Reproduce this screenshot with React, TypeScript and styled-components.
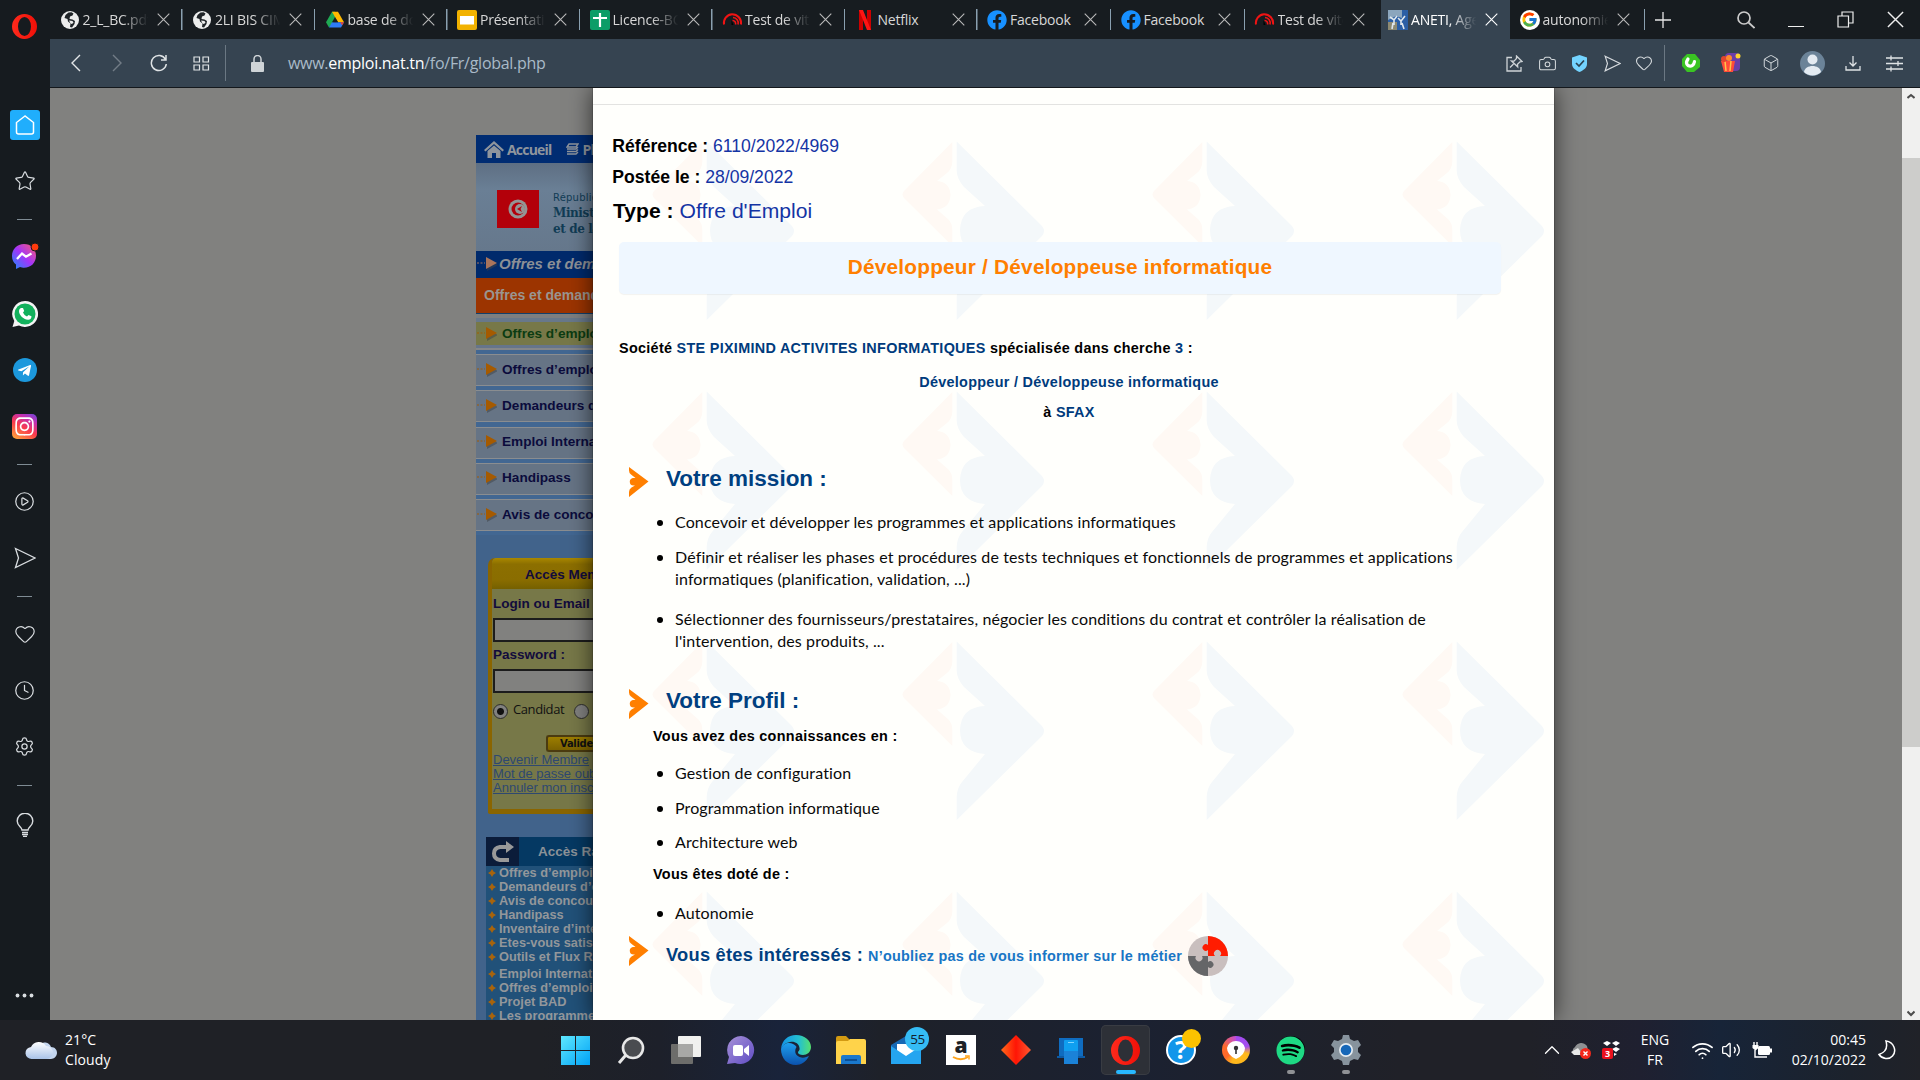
import React from "react";
import styled, { createGlobalStyle, css } from "styled-components";
import { FaFacebook, FaTelegramPlane, FaSpotify, FaInstagram } from "react-icons/fa";
import { FcGoogle } from "react-icons/fc";
import { Star, Heart, Clock, Settings, CirclePlay, Camera, Box, Wifi, Volume2, ChevronUp } from "lucide-react";

const ARIAL = '"Liberation Sans", Arial, sans-serif';
const UI = '"Open Sans", "Noto Sans", sans-serif';
const BODY = "Lato, sans-serif";

const Global = createGlobalStyle`
  * { box-sizing: border-box; }
  html, body { margin: 0; padding: 0; background: #161b1f; }
  svg { display: block; flex: none; }
`;

const Screen = styled.div`
  width: 1920px;
  height: 1080px;
  display: flex;
  flex-direction: column;
  overflow: hidden;
  background: #161b1f;
  font-family: ${UI};
`;
const Browser = styled.div`
  display: flex;
  height: 1020px;
`;
const Main = styled.div`
  width: 1870px;
  display: flex;
  flex-direction: column;
`;

/* ---------- sidebar ---------- */
const Rail = styled.div`
  width: 50px;
  flex: none;
  display: flex;
  flex-direction: column;
  align-items: center;
  padding: 12px 1px 0 0;
  color: #d9dde0;
  background: #161b1f;
`;
const RailItem = styled.div<{ $h: number; $mt?: number }>`
  height: ${(p) => p.$h}px;
  margin-top: ${(p) => p.$mt ?? 0}px;
  display: flex;
  align-items: center;
  justify-content: center;
  flex: none;
`;
const HomeTile = styled.div`
  width: 30px;
  height: 30px;
  border-radius: 3px;
  background: #20aefc;
  display: flex;
  align-items: center;
  justify-content: center;
`;
const RailRule = styled.div`
  width: 15px;
  height: 1px;
  background: #7f8c94;
`;
const Disc = styled.div<{ $bg: string; $size: number; $square?: boolean }>`
  width: ${(p) => p.$size}px;
  height: ${(p) => p.$size}px;
  border-radius: ${(p) => (p.$square ? "5px" : "50%")};
  background: ${(p) => p.$bg};
  color: #fff;
  display: flex;
  align-items: center;
  justify-content: center;
`;

/* ---------- tabs ---------- */
const TabBar = styled.div`
  height: 39px;
  display: flex;
  background: #171c20;
  color: #d8d8d8;
`;
const TabBox = styled.div<{ $w: number; $active?: boolean; $line?: boolean }>`
  width: ${(p) => p.$w}px;
  flex: none;
  display: flex;
  align-items: center;
  padding-left: ${(p) => (p.$active ? 7 : 9.5)}px;
  background: ${(p) => (p.$active ? "#364451" : "transparent")};
  color: ${(p) => (p.$active ? "#fff" : "inherit")};
  ${(p) => p.$line && css`
    background: linear-gradient(#8aa0b0, #8aa0b0) right 0 top 9px / 1.5px 21px no-repeat;
  `}
`;
const Fav = styled.div`
  width: 20px;
  height: 20px;
  display: flex;
  align-items: center;
  justify-content: center;
  margin-right: 3px;
`;
const TabText = styled.div<{ $fade?: boolean }>`
  width: 66px;
  overflow: hidden;
  white-space: nowrap;
  font-size: 14px;
  line-height: 22px;
  letter-spacing: -0.22px;
  ${(p) => p.$fade && css`mask-image: linear-gradient(90deg, #000 58%, transparent 99%);`}
`;
const CloseSlot = styled.div`
  margin-left: 8px;
`;
const WindowButtons = styled.div`
  display: flex;
  align-items: center;
  margin-left: auto;
  gap: 33px;
  padding-right: 16px;
`;
const PlusSlot = styled.div`
  display: flex;
  align-items: center;
  padding-left: 10px;
`;

/* ---------- address bar ---------- */
const AddressBar = styled.div`
  height: 49px;
  display: flex;
  align-items: center;
  background: #364451;
  border-bottom: 1px solid #14181c;
  color: #d5dadd;
  padding-left: 16px;
`;
const ToolSlot = styled.div<{ $w: number; $pl?: number; $dim?: boolean }>`
  width: ${(p) => p.$w}px;
  padding-left: ${(p) => p.$pl ?? 0}px;
  flex: none;
  display: flex;
  justify-content: center;
  opacity: ${(p) => (p.$dim ? 0.35 : 1)};
`;
const BarRule = styled.div`
  width: 1px;
  height: 36px;
  flex: none;
  background: #6b7883;
`;
const Url = styled.div`
  font-size: 16px;
  line-height: 24px;
  color: #a9bac8;
  letter-spacing: -0.28px;
  width: 1200px;
  flex: none;
  b { font-weight: 400; color: #fff; }
`;

/* ---------- page ---------- */
const Viewport = styled.div`
  height: 932px;
  display: flex;
  background: #81817f;
  position: relative;
  overflow: hidden;
`;
const SitePane = styled.div`
  width: 117px;
  margin-left: 426px;
  height: 932px;
  flex: none;
  overflow: hidden;
  white-space: nowrap;
  font-family: ${ARIAL};
  font-weight: 700;
  padding-top: 47px;
`;
const TopNav = styled.div`
  height: 28px;
  background: #002c72;
  display: flex;
  align-items: center;
  color: #8f959d;
  font: 700 14px "Open Sans", sans-serif;
  letter-spacing: -0.8px;
  padding-left: 8px;
  gap: 3px;
`;
const NavGap = styled.div`
  width: 9px;
  flex: none;
`;
const Ministry = styled.div`
  height: 88px;
  background: linear-gradient(#5e6f83, #6a7f95 30%, #66788c);
  display: flex;
  padding: 27px 0 0 21px;
  gap: 14px;
`;
const Flag = styled.div`
  width: 42px;
  height: 38px;
  flex: none;
  background: #b3000a;
  display: flex;
  align-items: center;
  justify-content: center;
`;
const MinistryText = styled.div`
  font: 700 12px/16px "DejaVu Serif", serif;
  color: #113c55;
  letter-spacing: -0.4px;
  span { font: 400 10px/15px "DejaVu Sans", sans-serif; display: block; letter-spacing: 0.2px; }
`;
const BlueBanner = styled.div`
  height: 27px;
  background: #002a6c;
  color: #8c9096;
  font-style: italic;
  font-size: 15px;
  display: flex;
  align-items: center;
  gap: 2px;
  padding: 0 0 3px 1px;
`;
const OrangeBanner = styled.div`
  height: 36px;
  background: #9c3400;
  color: #9a9590;
  font-size: 14px;
  line-height: 34px;
  padding-left: 8px;
  border-bottom: 1px solid #12406b;
`;
const Menu = styled.div`
  padding-top: 4px;
  background: #7d7f80;
  display: flex;
  flex-direction: column;
`;
const MenuItem = styled.div<{ $on?: boolean }>`
  height: 36.2px;
  display: flex;
  align-items: center;
  gap: 5px;
  font-size: 13.6px;
  padding: 0 0 6px 1px;
  color: ${(p) => (p.$on ? "#0b3c12" : "#0b0b3c")};
  background: ${(p) =>
    p.$on
      ? "linear-gradient(#68788a 4px,#777848 4px,#777848 27px,#66758a 27px,#66758a 30px,#858789 30px,#858789 32px,#426792 32px)"
      : "linear-gradient(#8a8d90 1px,#667485 1px,#667485 31px,#8a8d90 31px,#8a8d90 32px,#426792 32px)"};
`;
const SiteBody = styled.div`
  background: #41638b;
  height: 500px;
  padding: 23px 0 0 10px;
`;
const LoginBox = styled.div`
  margin-left: 2px;
  height: 256px;
  background: #777848;
  border: solid #8a6500;
  border-width: 0 0 5px 4px;
  border-radius: 7px 0 0 2px;
  color: #120b3c;
  font-size: 13.5px;
`;
const LoginHead = styled.div`
  height: 31px;
  background: linear-gradient(#a98800, #8c6f00 20%, #8a6d00 70%, #756000);
  line-height: 33px;
  padding-left: 33px;
  border-radius: 5px 0 0 0;
`;
const FieldLabel = styled.div<{ $mt: number }>`
  margin-top: ${(p) => p.$mt}px;
  line-height: 18px;
  padding-left: 1px;
`;
const Field = styled.div<{ $mt: number }>`
  margin: ${(p) => p.$mt}px 0 0 1px;
  height: 24px;
  background: #81817f;
  border: 2px solid #1c1c1c;
  border-right: 0;
`;
const Radios = styled.div`
  display: flex;
  align-items: center;
  gap: 5px;
  height: 22px;
  margin-top: 5px;
  padding-left: 1px;
  color: #111;
  font: 400 13px "Open Sans", sans-serif;
  letter-spacing: -0.4px;
`;
const Radio = styled.div<{ $on?: boolean; $ml?: number }>`
  width: 15px;
  height: 15px;
  flex: none;
  margin: 4px 0 0 ${(p) => p.$ml ?? 0}px;
  border-radius: 50%;
  border: 1.5px solid #2d2d2d;
  background: ${(p) => (p.$on ? "radial-gradient(#111 0 3px, #81817f 4px)" : "#81817f")};
`;
const Valider = styled.div`
  height: 17px;
  margin: 15px 0 0 54px;
  border: 2px solid #4b3b10;
  border-right: 0;
  border-radius: 3px 0 0 3px;
  background: linear-gradient(#9c7e00, #7c6200);
  color: #111;
  font: 700 10px/13px "DejaVu Sans", sans-serif;
  letter-spacing: -0.3px;
  padding-left: 12px;
`;
const Links = styled.div`
  font-weight: 400;
  font-size: 13px;
  line-height: 14px;
  color: #2e4870;
  text-decoration: underline;
  padding-top: 1px;
  padding-left: 1px;
`;
const QuickHead = styled.div`
  margin-top: 23px;
  height: 29px;
  display: flex;
  align-items: center;
  background: #053963;
  color: #8b9298;
  font-size: 13.5px;
  gap: 19px;
`;
const QuickIcon = styled.div`
  width: 33px;
  height: 29px;
  flex: none;
  background: #0b1c3a;
  display: flex;
  align-items: center;
  justify-content: center;
`;
const Quick = styled.div`
  background: #215179;
  color: #93979b;
  font-size: 12.8px;
  height: 170px;
`;
const QuickRow = styled.div<{ $gap?: boolean }>`
  display: flex;
  align-items: center;
  height: 14px;
  margin-top: ${(p) => (p.$gap ? 3 : 0)}px;
  gap: 3px;
  padding: 0 0 1px 2px;
`;

const tile = encodeURIComponent(
  `<svg xmlns="http://www.w3.org/2000/svg" width="250" height="250"><path fill="#fff9f4" d="M109.3 54V74Q109 81 104 85L94 93Q107 94 107.500 107Q107 120 94 121.500L105 131Q109.300 135 109.300 142V158L61 110Q58 106.500 61 103Z"/><path fill="#f4f8fa" d="M113.700 53.500L199 138Q203 143 199 148L113.700 232V209Q114 200 119 194L142 166Q117 164 117 142Q118 119 142 118L121 99Q114 91 113.700 83Z"/></svg>`
);
const Modal = styled.div`
  width: 961px;
  height: 932px;
  flex: none;
  background: #fffffc url("data:image/svg+xml,${tile}") 0 0 / 250px 250px;
  box-shadow: 0 0 22px rgba(0, 0, 0, 0.65), 0 0 1px #222;
  font-family: ${ARIAL};
  color: #000;
  white-space: nowrap;
  z-index: 1;
`;
const ModalTop = styled.div`
  height: 17px;
  background: #fffffc;
  border-bottom: 1px solid #e3e3e1;
`;
const Meta = styled.div<{ $size: number; $mt?: number; $pl?: number }>`
  font-size: ${(p) => p.$size}px;
  line-height: 31px;
  height: 31px;
  margin-top: ${(p) => p.$mt ?? 0}px;
  padding-left: ${(p) => p.$pl ?? 19.3}px;
  color: #1434a4;
  b { color: #000; }
`;
const JobTitle = styled.div`
  margin: 16px 0 0 26px;
  width: 882px;
  height: 52px;
  line-height: 50px;
  border-radius: 5px;
  background: #eff7ff;
  box-shadow: 0 1px 1px rgba(0, 0, 0, 0.05);
  text-align: center;
  font-weight: 700;
  font-size: 20.8px;
  letter-spacing: 0.22px;
  color: #ff7f00;
`;
const Line = styled.div<{ $mt: number; $pl?: number; $center?: boolean }>`
  margin-top: ${(p) => p.$mt}px;
  height: 24px;
  line-height: 24px;
  font-size: 14.4px;
  font-weight: 700;
  letter-spacing: 0.3px;
  padding-left: ${(p) => p.$pl ?? 0}px;
  ${(p) => p.$center && css`width: 952px; text-align: center;`}
`;
const Navy = styled.span`
  color: #003b7c;
`;
const Heading = styled.div<{ $mt: number }>`
  margin-top: ${(p) => p.$mt}px;
  height: 34px;
  display: flex;
  padding-left: 36px;
  gap: 17px;
  font-weight: 700;
  font-size: 22.5px;
  line-height: 31px;
  color: #003f80;
  & > svg { margin-top: 4px; }
`;
const Interested = styled.div`
  padding-top: 8px;
  font-size: 18.3px;
  line-height: 30px;
  display: flex;
  letter-spacing: 0.24px;
`;
const Metier = styled.span`
  font-size: 14.4px;
  color: #1976c5;
  letter-spacing: 0.25px;
  padding: 1px 6px 0 5px;
`;
const PuzzleSlot = styled.div`
  margin-top: -4px;
`;
const Item = styled.div<{ $mt: number }>`
  margin-top: ${(p) => p.$mt}px;
  display: flex;
  padding-left: 64px;
  gap: 12px;
  font-family: ${BODY};
  font-size: 16px;
  line-height: 22px;
  letter-spacing: 0.12px;
  color: #0a0a0a;
`;
const Bullet = styled.div`
  width: 6px;
  height: 6px;
  border-radius: 50%;
  background: #000;
  margin-top: 9px;
`;
const Scroll = styled.div`
  width: 18px;
  margin-left: auto;
  background: #f0f0ef;
  display: flex;
  flex-direction: column;
  align-items: center;
  padding-top: 5px;
  z-index: 2;
`;
const Thumb = styled.div`
  width: 18px;
  height: 589px;
  margin: 58px 0 263px;
  background: #cdcdcb;
`;

/* ---------- taskbar ---------- */
const Taskbar = styled.div`
  height: 60px;
  flex: none;
  display: flex;
  color: #fff;
  background: linear-gradient(90deg, #1f2126 0, #1f2126 540px, #1d202a 660px, #19233a 780px, #1e2129 880px, #1b2131 1130px, #202128 1400px, #202128 1530px, #1f2030 1640px, #172438 1720px, #1c222c 1850px, #202228 1920px);
`;
const Weather = styled.div`
  width: 548px;
  display: flex;
  align-items: center;
  padding-left: 25px;
  gap: 8px;
`;
const Stack = styled.div<{ $align?: string; $ls?: number }>`
  font-size: 14px;
  line-height: 20px;
  letter-spacing: ${(p) => p.$ls ?? 0}px;
  text-align: ${(p) => p.$align ?? "left"};
`;
const Apps = styled.div`
  display: flex;
  width: 825px;
`;
const AppButton = styled.div<{ $on?: boolean; $mark?: boolean }>`
  width: 50px;
  height: 50px;
  margin: 5px 2.55px 0;
  border-radius: 5px;
  display: flex;
  align-items: center;
  justify-content: center;
  position: relative;
  ${(p) => p.$on && css`background: #2d3037; box-shadow: inset 0 0 0 1px #393c43;`}
  ${(p) => (p.$on || p.$mark) && css`
    &::after {
      content: "";
      position: absolute;
      bottom: 1px;
      width: ${p.$on ? 20 : 8}px;
      height: 4px;
      border-radius: 2px;
      background: ${p.$on ? "#28b8ff" : "#8f9195"};
    }
  `}
`;
const Badge = styled.div<{ $bg: string; $size: number; $right: number; $top: number }>`
  position: absolute;
  top: ${(p) => p.$top}px;
  right: ${(p) => p.$right}px;
  width: ${(p) => p.$size}px;
  height: ${(p) => p.$size}px;
  border-radius: 50%;
  background: ${(p) => p.$bg};
  color: #10202c;
  font-size: 13.5px;
  letter-spacing: -0.5px;
  display: flex;
  align-items: center;
  justify-content: center;
`;
const AmazonTile = styled.div`
  width: 30px;
  height: 30px;
  background: #fff;
  display: flex;
  align-items: center;
  justify-content: center;
`;
const Tray = styled.div`
  margin-left: auto;
  display: flex;
  align-items: center;
  padding-right: 24px;
`;
const TraySlot = styled.div<{ $w: number; $end?: boolean }>`
  width: ${(p) => p.$w}px;
  flex: none;
  display: flex;
  justify-content: ${(p) => (p.$end ? "flex-end" : "center")};
`;

/* ---------- drawings ---------- */
const Cross = ({ s = 13, c = "#b9b9b9" }: { s?: number; c?: string }) => (
  <svg width={s} height={s} viewBox="0 0 13 13" stroke={c} strokeWidth="1.1"><path d="M.7.7l11.6 11.6M12.3.7L.7 12.3" /></svg>
);
const OperaO = ({ w, h, sw }: { w: number; h: number; sw: number }) => (
  <svg width={w} height={h} viewBox={`0 0 ${w} ${h}`} fill="none">
    <defs><linearGradient id={`op${w}`}><stop stopColor="#ff2a1c" /><stop offset="1" stopColor="#f01008" /></linearGradient></defs>
    <path fill={`url(#op${w})`} fillRule="evenodd" d={`M${w / 2} 0A${w / 2} ${h / 2} 0 1 1 ${w / 2} ${h}A${w / 2} ${h / 2} 0 1 1 ${w / 2} 0ZM${w / 2} ${sw * 0.5}A${w / 2 - sw} ${h / 2 - sw * 0.5} 0 1 0 ${w / 2} ${h - sw * 0.5}A${w / 2 - sw} ${h / 2 - sw * 0.5} 0 1 0 ${w / 2} ${sw * 0.5}Z`} />
  </svg>
);
const Globe = () => (
  <svg width="18" height="18" viewBox="0 0 18 18"><circle cx="9" cy="9" r="9" fill="#eceded" /><path fill="#1f2428" d="M7.500 1.500l3-.3 2 1.300-1 2-2.500 1-.5 2.500 3 .5 2.500 1.500-.5 3-2.500 3.500-2-.5.5-3.500-2.500-2-.5-2.500-3-1 1-3z" /><path fill="#eceded" d="M8 9.500l3.500.5 1 1.500-1.500 1.500-1.500-.5z" /></svg>
);
const Drive = () => (
  <svg width="18" height="17" viewBox="0 0 24 21"><path fill="#1faa53" d="M8 0h4l4 7L4 21 0 14z" /><path fill="#ffba00" d="M8 0h8l8 14h-8z" /><path fill="#2e7bf6" d="M4 21l4-7h16l-4 7z" /><path fill="#ea4335" d="M19 14h5l-2.500 4z" /><path fill="#171c20" d="M12 7l4 7H8z" /></svg>
);
const Slides = () => <svg width="20" height="20"><rect width="20" height="20" rx="2" fill="#f2b200" /><rect x="3" y="6" width="14" height="8.500" fill="#fff" /></svg>;
const Sheets = () => <svg width="20" height="20"><rect width="20" height="20" rx="2" fill="#0c9d67" /><path d="M10 3v14M3 8h14" stroke="#fff" strokeWidth="2.2" /></svg>;
const Speed = () => (
  <svg width="21" height="16" viewBox="0 0 21 16" fill="none" stroke="#f01414"><path strokeWidth="2" d="M2 12.500A8.800 8.800 0 0 1 10 2.200 9 9 0 0 1 19 12.500" /><path strokeWidth="1.6" d="M11 5.500a5.500 5.500 0 0 1 5 7M10.500 8.500a3 3 0 0 1 3 4" /><path fill="#000" stroke="none" d="M9.500 8l2 5h-2z" /></svg>
);
const NetflixN = () => <svg width="12" height="20"><path fill="#c00" d="M0 0h4v20H0zM8 0h4v20H8z" /><path fill="#ff1414" d="M0 0h4l8 20H8z" /></svg>;
const Aneti = () => (
  <svg width="20" height="20"><rect width="20" height="20" fill="#2b5fa5" /><path fill="#8ba6bd" d="M0 0h14v8L8 6 0 10z" /><path fill="#8d8a72" d="M0 12h9v8H0z" /><g stroke="#dfe8ee" strokeWidth="1.6" fill="none"><path d="M2 7l4 3 3-4M6 10v5M5 13l-1 6M10 8l3 3 4-5M13 11v4M14 13l2 6" /></g></svg>
);
const Chevron = ({ d }: { d: string }) => <svg width="12" height="20" viewBox="0 0 12 20" fill="none" stroke="#e3e6e8" strokeWidth="1.4"><path d={d} /></svg>;
const Send = ({ s, sw = 1.3 }: { s: number; sw?: number }) => <svg width={s} height={s} viewBox="0 0 22 22" fill="none" stroke="#d9dde0" strokeWidth={sw}><path d="M1.500 1.500L21 11 1.500 20.500 4.500 11z" /></svg>;
const ArrowMark = () => (
  <svg width="20" height="30" viewBox="0 0 20 30"><path fill="#ff7f00" d="M0 0L19.500 14.500 0 30V25Q0 22 2.500 20.500L6 18.500C2 19 .8 17 .8 14.800S2 10.500 6.500 11L2 7.500Q0 6 0 3.500Z" /></svg>
);
const MenuArrow = ({ c = "#a55a00" }: { c?: string }) => (
  <svg width="20" height="15" viewBox="0 0 20 15"><path d="M0 7h8" stroke={c} strokeWidth="1" strokeDasharray="2 1.5" /><path d="M10 3v12l11-6z" fill="#3e4245" opacity=".5" /><path d="M9 1v12l11-6z" fill={c} /></svg>
);
const Puzzle = () => (
  <svg width="40" height="40" viewBox="0 0 40 40"><circle cx="20" cy="20" r="20" fill="#c9bfbe" /><path fill="#ff1c00" d="M20 0A20 20 0 0 1 40 20H32A3.500 3.500 0 1 0 27 20H20V14A3.300 3.300 0 1 1 20 9Z" /><path fill="#656668" d="M0 20A20 20 0 0 0 20 40V31A3.300 3.300 0 1 0 20 26V20H14A3.500 3.500 0 1 1 8 20Z" /></svg>
);
const Caret = ({ up }: { up?: boolean }) => <svg width="8" height="7" viewBox="0 0 8 7" fill="none" stroke="#4d4d4d" strokeWidth="2"><path d={up ? "M.5 5L4 2l3.500 3" : "M.5 1.500L4 5l3.500-3.500"} /></svg>;

const tabs = [
  { t: "2_L_BC.pdf", i: <Globe />, w: 132.5, fade: true },
  { t: "2LI BIS CIMR", i: <Globe />, w: 132.5, fade: true },
  { t: "base de données", i: <Drive />, w: 132.5, fade: true },
  { t: "Présentation", i: <Slides />, w: 132.5, fade: true },
  { t: "Licence-BC", i: <Sheets />, w: 132.5, fade: true },
  { t: "Test de vitesse", i: <Speed />, w: 132.5, fade: true },
  { t: "Netflix", i: <NetflixN />, w: 132.5 },
  { t: "Facebook", i: <FaFacebook size={20} color="#1790ff" />, w: 133.5 },
  { t: "Facebook", i: <FaFacebook size={20} color="#1790ff" />, w: 134 },
  { t: "Test de vitesse", i: <Speed />, w: 136, fade: true },
];

export default function App() {
  return (
    <Screen>
      <Global />
      <Browser>
        <Rail>
          <RailItem $h={28}><OperaO w={25} h={25} sw={6} /></RailItem>
          <RailItem $h={30} $mt={70}>
            <HomeTile><svg width="20" height="22" viewBox="0 0 20 22" fill="none" stroke="#fff" strokeWidth="1.5"><path d="M10 2L1.500 8.500V18Q1.500 20 3.500 20h13q2 0 2-2V8.500z" /></svg></HomeTile>
          </RailItem>
          <RailItem $h={24} $mt={29}><Star size={22} strokeWidth={1.3} /></RailItem>
          <RailItem $h={1} $mt={26}><RailRule /></RailItem>
          <RailItem $h={26} $mt={23}>
            <svg width="28" height="26" viewBox="0 0 28 26"><defs><linearGradient id="ms" x1="0" y1="1" x2="1" y2="0"><stop stopColor="#1a8cff" /><stop offset=".5" stopColor="#a334fa" /><stop offset="1" stopColor="#ff5c70" /></linearGradient></defs><path fill="url(#ms)" d="M13 1C6 1 1 6 1 13c0 4 1.500 6.500 4 8.500V26l4-2c1 .5 3 .8 4 .8 7 0 12-5 12-12S20 1 13 1z" /><path d="M6 16l5-5.500 4 3.200 5.500-3.200" stroke="#fff" strokeWidth="2.3" fill="none" /><circle cx="24" cy="4" r="4" fill="#ff3a0c" stroke="#161b1f" /></svg>
          </RailItem>
          <RailItem $h={26} $mt={32}><svg width="26" height="26" viewBox="0 0 26 26"><path fill="#f4f4f4" d="M13 0a13 13 0 1 1-6 24.500L.5 26l1.800-6A13 13 0 0 1 13 0z" /><circle cx="13" cy="13" r="10.5" fill="#12b15c" /><path fill="#fff" d="M9 7l2 0 1.200 3-1.200 1.500c1 2 2 3 4 4l1.500-1.500 3 1.300c0 2.500-1.700 3.700-3.500 3.500-5-.5-9-5-9-8.500C7 8.500 8 7.300 9 7z" /></svg></RailItem>
          <RailItem $h={24} $mt={31}><Disc $bg="#1c98dc" $size={24}><FaTelegramPlane size={15} /></Disc></RailItem>
          <RailItem $h={26} $mt={31}><Disc $bg="linear-gradient(30deg,#ffb03a,#fa3b4b 45%,#c42fb0 75%,#6a4be0)" $size={25} $square><FaInstagram size={21} /></Disc></RailItem>
          <RailItem $h={1} $mt={25}><RailRule /></RailItem>
          <RailItem $h={22} $mt={25}><CirclePlay size={21} strokeWidth={1.4} /></RailItem>
          <RailItem $h={22} $mt={35}><Send s={22} /></RailItem>
          <RailItem $h={1} $mt={27}><RailRule /></RailItem>
          <RailItem $h={22} $mt={26}><Heart size={22} strokeWidth={1.3} /></RailItem>
          <RailItem $h={22} $mt={34}><Clock size={21} strokeWidth={1.4} /></RailItem>
          <RailItem $h={22} $mt={34}><Settings size={21} strokeWidth={1.4} /></RailItem>
          <RailItem $h={1} $mt={28}><RailRule /></RailItem>
          <RailItem $h={24} $mt={27}>
            <svg width="18" height="24" viewBox="0 0 18 24" fill="none" stroke="#d9dde0" strokeWidth="1.4"><path d="M6 17c0-3-4.800-4-4.800-9a7.800 7.800 0 0 1 15.600 0c0 5-4.800 6-4.800 9zM6 19.500h6M6 21.500h6M7 23.500h4" /></svg>
          </RailItem>
          <RailItem $h={6} $mt={155}><svg width="19" height="5" fill="#d9dde0"><circle cx="2.5" cy="2.5" r="1.9" /><circle cx="9.5" cy="2.5" r="1.9" /><circle cx="16.5" cy="2.5" r="1.9" /></svg></RailItem>
        </Rail>
        <Main>
          <TabBar>
            {tabs.map((x, i) => (
              <TabBox key={i} $w={x.w} $line={i < 9}>
                <Fav>{x.i}</Fav>
                <TabText $fade={x.fade}>{x.t}</TabText>
                <CloseSlot><Cross /></CloseSlot>
              </TabBox>
            ))}
            <TabBox $w={129} $active>
              <Fav><Aneti /></Fav>
              <TabText $fade>ANETI, Agence</TabText>
              <CloseSlot><Cross c="#fff" /></CloseSlot>
            </TabBox>
            <TabBox $w={135} $line>
              <Fav><Disc $bg="#fff" $size={20}><FcGoogle size={17} /></Disc></Fav>
              <TabText $fade>autonomie</TabText>
              <CloseSlot><Cross /></CloseSlot>
            </TabBox>
            <PlusSlot><svg width="16" height="16" stroke="#e6e6e6" strokeWidth="1.3"><path d="M8 0v16M0 8h16" /></svg></PlusSlot>
            <WindowButtons>
              <svg width="18" height="18" viewBox="0 0 18 18" fill="none" stroke="#ccc" strokeWidth="1.7"><circle cx="7" cy="7" r="6" /><path d="M11.500 11.500l6 5.500" /></svg>
              <svg width="16" height="18" stroke="#eee"><path d="M0 15.500h16" /></svg>
              <svg width="17" height="17" fill="none" stroke="#eee" strokeWidth="1.2"><path d="M1 5h10.500v11H1zM5 5V1h11v11h-4.500" /></svg>
              <Cross s={17} c="#eee" />
            </WindowButtons>
          </TabBar>
          <AddressBar>
            <ToolSlot $w={20}><Chevron d="M10 2L2 10l8 8" /></ToolSlot>
            <ToolSlot $w={62} $dim><Chevron d="M2 2l8 8-8 8" /></ToolSlot>
            <ToolSlot $w={22}><svg width="18" height="18" viewBox="0 0 18 18" fill="none" stroke="#dfe3e5" strokeWidth="1.5"><path d="M15.500 5.500A7.500 7.500 0 1 0 16.300 10M16 1v5h-5" /></svg></ToolSlot>
            <ToolSlot $w={55} $pl={7}><svg width="17" height="15" fill="none" stroke="#dfe3e5" strokeWidth="1.2"><path d="M1 1h5.500v5H1zM10 1h5.500v5H10zM1 9h5.500v5H1zM10 9h5.500v5H10z" /></svg></ToolSlot>
            <BarRule />
            <ToolSlot $w={62}><svg width="13" height="17" viewBox="0 0 13 17"><rect y="7" width="13" height="10" rx="1" fill="#cfd4d7" /><path d="M3 7V4a3.500 3.500 0 0 1 7 0v3" fill="none" stroke="#cfd4d7" strokeWidth="1.5" /></svg></ToolSlot>
            <Url>www.<b>emploi.nat.tn</b>/fo/Fr/global.php</Url>
            <ToolSlot $w={52}><svg width="17" height="17" viewBox="0 0 17 17" fill="none" stroke="#cfd4d7" strokeWidth="1.3"><path d="M6 2.500H1V16h14v-4M10.500 1l5.500 5.500-2 .3-2.500 2.500.2 2.500L5.500 6l2.500.2L10.500 3.500zM7.500 9L4 12.500" /></svg></ToolSlot>
            <ToolSlot $w={14}><Camera size={19} strokeWidth={1.3} /></ToolSlot>
            <ToolSlot $w={51}><svg width="15" height="17" viewBox="0 0 15 17"><path fill="#74d4ff" d="M7.500 0L15 2.500V9c0 4-4 6.500-7.500 8C4 15.500 0 13 0 9V2.500z" /><path d="M4 8l3 3 5-5.500" stroke="#2b4150" strokeWidth="1.7" fill="none" /></svg></ToolSlot>
            <ToolSlot $w={14}><Send s={17} sw={1.5} /></ToolSlot>
            <ToolSlot $w={45} $pl={5}><Heart size={18} strokeWidth={1.4} /></ToolSlot>
            <BarRule />
            <ToolSlot $w={51}><svg width="20" height="20"><path fill="#3ac423" d="M6 1h8l5 6v7l-6 5H6l-5-6V6z" /><path fill="none" stroke="#fff" strokeWidth="3.2" strokeLinecap="round" d="M7 6c-2 3-2 5 0 6.500 3 1.500 6 0 6.500-4" /></svg></ToolSlot>
            <ToolSlot $w={30}><svg width="20" height="20"><rect x="4" y="0" width="15" height="18" rx="4" fill="#6b3ea8" /><path fill="#ff4b3a" d="M0 8h14l-2 11H3z" /><path stroke="#ffc34a" strokeWidth="1.5" d="M4 8l1 10M10 8l-1 10" /><circle cx="3" cy="6" r="3" fill="#e2452e" /><circle cx="8" cy="5" r="3" fill="#ff8a2e" /><circle cx="17" cy="3" r="2.5" fill="#ffd32e" /></svg></ToolSlot>
            <ToolSlot $w={50}><Box size={18} strokeWidth={1.3} /></ToolSlot>
            <ToolSlot $w={32}><svg width="25" height="25" viewBox="0 0 25 25"><circle cx="12.5" cy="12.5" r="12.5" fill="#6b8398" /><circle cx="12.5" cy="8.5" r="5" fill="#e4ebf2" /><path fill="#e4ebf2" d="M4 21c1-8 16-8 17 0-4 4.500-13 4.500-17 0z" /></svg></ToolSlot>
            <ToolSlot $w={49}><svg width="16" height="16" fill="none" stroke="#dfe3e5" strokeWidth="1.3"><path d="M8 1v10M4.500 7.500L8 11l3.500-3.500M1 11v4h14v-4" /></svg></ToolSlot>
            <ToolSlot $w={34}><svg width="17" height="17" fill="none" stroke="#dfe3e5" strokeWidth="1.3"><path d="M0 3h17M0 8.500h17M0 14h17M5 .5v5M12 6v5M5 11.500v5" /></svg></ToolSlot>
          </AddressBar>
          <Viewport>
            <SitePane>
              <TopNav>
                <svg width="20" height="17" viewBox="0 0 20 17" fill="#8f959d"><path d="M0 9L10 0l10 9-1.500 1.500L10 3 1.500 10.500z" /><path d="M3.500 10L10 4.500 16.500 10v7H12v-5H8v5H3.500z" /></svg>
                Accueil
                <NavGap />
                <svg width="13" height="13" viewBox="0 0 13 13" fill="none" stroke="#8f959d" strokeWidth="1.4"><path d="M3 1h9l-2 3H1zM1 6h9l2-2M1 8.500h9l2-2M1 11h9l2-2" /></svg>
                Pl
              </TopNav>
              <Ministry>
                <Flag><svg width="20" height="20"><circle cx="10" cy="10" r="9.5" fill="#949494" /><circle cx="10" cy="10" r="6.5" fill="#b3000a" /><circle cx="12" cy="10" r="5" fill="#949494" /><path fill="#b3000a" d="M9 10l5-3-1.500 3L14 13z" /></svg></Flag>
                <MinistryText><span>République</span>Ministère<br />et de la F</MinistryText>
              </Ministry>
              <BlueBanner><MenuArrow c="#a8745c" />Offres et dem</BlueBanner>
              <OrangeBanner>Offres et demandes</OrangeBanner>
              <Menu>
                <MenuItem $on><MenuArrow />Offres d’emploi</MenuItem>
                {["Offres d’emploi", "Demandeurs d", "Emploi Interna", "Handipass", "Avis de conco"].map((m, i) => (
                  <MenuItem key={i}><MenuArrow />{m}</MenuItem>
                ))}
              </Menu>
              <SiteBody>
                <LoginBox>
                  <LoginHead>Accès Mem</LoginHead>
                  <FieldLabel $mt={6}>Login ou Email</FieldLabel>
                  <Field $mt={5} />
                  <FieldLabel $mt={4}>Password :</FieldLabel>
                  <Field $mt={5} />
                  <Radios><Radio $on />Candidat<Radio $ml={5} /></Radios>
                  <Valider>Valider</Valider>
                  <Links>Devenir Membre<br />Mot de passe oubl<br />Annuler mon inscr</Links>
                </LoginBox>
                <QuickHead>
                  <QuickIcon><svg width="24" height="22" fill="none" stroke="#999" strokeWidth="4"><path d="M18 19H9Q3 18 3 12.500T9 6h8" /><path d="M15 0l8 6-8 6z" fill="#999" stroke="none" /></svg></QuickIcon>
                  Accès Ra
                </QuickHead>
                <Quick>
                  {["Offres d’emploi", "Demandeurs d’e", "Avis de concour", "Handipass", "Inventaire d’inté", "Etes-vous satisf", "Outils et Flux RS", "Emploi Internati", "Offres d’emploi", "Projet BAD", "Les programme"].map((m, i) => (
                    <QuickRow key={i} $gap={i === 7}><svg width="8" height="8"><path fill="#a8640c" d="M4 0l1.500 2.500L8 4 5.500 5.500 4 8 2.500 5.500 0 4l2.500-1.500z" /></svg>{m}</QuickRow>
                  ))}
                </Quick>
              </SiteBody>
            </SitePane>
            <Modal>
              <ModalTop />
              <Meta $size={17.6} $mt={26}><b>Référence :</b> 6110/2022/4969</Meta>
              <Meta $size={17.6}><b>Postée le :</b> 28/09/2022</Meta>
              <Meta $size={21.12} $mt={2} $pl={20}><b>Type :</b> Offre d'Emploi</Meta>
              <JobTitle>Développeur / Développeuse informatique</JobTitle>
              <Line $mt={42} $pl={26}>Société <Navy>STE PIXIMIND ACTIVITES INFORMATIQUES</Navy> spécialisée dans cherche <Navy>3</Navy> :</Line>
              <Line $mt={10} $center><Navy>Développeur / Développeuse informatique</Navy></Line>
              <Line $mt={6} $center>à <Navy>SFAX</Navy></Line>
              <Heading $mt={39}><ArrowMark /><span>Votre mission :</span></Heading>
              <Item $mt={14}><Bullet /><span>Concevoir et développer les programmes et applications informatiques</span></Item>
              <Item $mt={13}><Bullet /><span>Définir et réaliser les phases et procédures de tests techniques et fonctionnels de programmes et applications<br />informatiques (planification, validation, ...)</span></Item>
              <Item $mt={18}><Bullet /><span>Sélectionner des fournisseurs/prestataires, négocier les conditions du contrat et contrôler la réalisation de<br />l'intervention, des produits, ...</span></Item>
              <Heading $mt={33}><ArrowMark /><span>Votre Profil :</span></Heading>
              <Line $mt={5} $pl={60}>Vous avez des connaissances en :</Line>
              <Item $mt={14}><Bullet /><span>Gestion de configuration</span></Item>
              <Item $mt={13}><Bullet /><span>Programmation informatique</span></Item>
              <Item $mt={12}><Bullet /><span>Architecture web</span></Item>
              <Line $mt={9} $pl={60}>Vous êtes doté de :</Line>
              <Item $mt={16}><Bullet /><span>Autonomie</span></Item>
              <Heading $mt={8}>
                <ArrowMark />
                <Interested>Vous êtes intéressés :<Metier>N’oubliez pas de vous informer sur le métier</Metier><PuzzleSlot><Puzzle /></PuzzleSlot></Interested>
              </Heading>
            </Modal>
            <Scroll><Caret up /><Thumb /><Caret /></Scroll>
          </Viewport>
        </Main>
      </Browser>
      <Taskbar>
        <Weather>
          <svg width="32" height="22" viewBox="0 0 32 22"><defs><linearGradient id="cl" x1="0" y1="0" x2="0" y2="1"><stop stopColor="#fff" /><stop offset="1" stopColor="#a9c3e8" /></linearGradient></defs><path fill="#c3d5ee" d="M14 6a7 7 0 0 1 12 2c4 0 6 3 6 6s-3 6-6 6H14z" /><path fill="url(#cl)" d="M7 20a6 6 0 0 1-1-12A8.500 8.500 0 0 1 21 7c4 0 7 3 7 6.500S25 20 21 20z" /></svg>
          <Stack $ls={0.1}>21°C<br />Cloudy</Stack>
        </Weather>
        <Apps>
          <AppButton><svg width="29" height="29"><defs><linearGradient id="wn" x2="1" y2="1"><stop stopColor="#5fe8ff" /><stop offset="1" stopColor="#00a2f5" /></linearGradient></defs><path fill="url(#wn)" d="M0 0h14v14H0zM15 0h14v14H15zM0 15h14v14H0zM15 15h14v14H15z" /></svg></AppButton>
          <AppButton><svg width="28" height="28" viewBox="0 0 28 28" fill="#4a4c50" stroke="#e8e8e8" strokeWidth="2.6"><circle cx="16" cy="12" r="10" /><path d="M8.500 19.500L2 27" strokeWidth="3" /></svg></AppButton>
          <AppButton><svg width="30" height="28"><rect x="7" width="23" height="21" rx="1" fill="#f1f1ef" /><rect y="8" width="22" height="20" rx="1" fill="#6d6d6b" /><rect x="7" y="8" width="15" height="13" fill="#a8a8a6" /></svg></AppButton>
          <AppButton><svg width="30" height="30"><defs><linearGradient id="ch" x2="1" y2="1"><stop stopColor="#a892d8" /><stop offset="1" stopColor="#5f4cc4" /></linearGradient></defs><path fill="url(#ch)" d="M15 1a14 14 0 1 1-6 27L1 29l2-7A14 14 0 0 1 15 1z" /><rect x="7" y="10" width="10" height="11" rx="2" fill="#fff" /><path fill="#fff" d="M18 14l5-4v11l-5-4z" /></svg></AppButton>
          <AppButton><svg width="30" height="30" viewBox="0 0 30 30"><defs><linearGradient id="eg" x1="0" x2="1"><stop stopColor="#1493e6" /><stop offset=".6" stopColor="#24c0d0" /><stop offset="1" stopColor="#55e070" /></linearGradient><linearGradient id="eb" x2="0" y2="1"><stop stopColor="#1ea0ee" /><stop offset="1" stopColor="#0b52ae" /></linearGradient></defs><path fill="url(#eg)" d="M0 14C1 5 7 0 15 0c9 0 15 6 15 12 0 5-4 8-8 8-3 0-5-1-5-2.500S19 16 18.500 13C18 8 13 6 9 7 4 8 1 11 0 14z" /><path fill="url(#eb)" d="M0 14C2 8 8 7 12 9c2 1 3 2 3.500 3-2 3-2 8 3 10 4 1.500 7 0 9.500-1-3 6-8 9-13 9C6 30 0 23 0 14z" /></svg></AppButton>
          <AppButton><svg width="30" height="28"><path fill="#d39a12" d="M0 2q0-2 2-2h8l4 4v8H0z" /><path fill="#ffd34a" d="M0 7q0-2 2-2h10l2-2h14q2 0 2 2v23H0z" /><path fill="#1a78cc" d="M5 21q0-2 2-2h16q2 0 2 2v7H5z" /><rect x="9" y="23" width="12" height="2" fill="#0c4f94" /></svg></AppButton>
          <AppButton><svg width="30" height="28"><path fill="#1668b4" d="M0 9L15 0l15 9v19H0z" /><path fill="#fff" d="M6 8h18v8l-9 5-9-5z" /><path fill="#25a5f0" d="M0 10l15 10 15-10v18H0z" /></svg><Badge $bg="#35bcf5" $size={24} $right={1} $top={2}>55</Badge></AppButton>
          <AppButton><AmazonTile><svg width="22" height="26" viewBox="0 0 22 26"><text x="11" y="16" textAnchor="middle" fontFamily="Open Sans" fontWeight="800" fontSize="21" fill="#1d2126">a</text><path d="M3 20q8 4.500 15 0" fill="none" stroke="#ffa41c" strokeWidth="2" /><path d="M15 19h4v3.500" fill="none" stroke="#ffa41c" strokeWidth="1.5" /></svg></AmazonTile></AppButton>
          <AppButton><svg width="30" height="30"><defs><linearGradient id="dm"><stop stopColor="#ff6a1a" /><stop offset=".5" stopColor="#ff1505" /><stop offset="1" stopColor="#ff5a30" /></linearGradient></defs><path fill="url(#dm)" d="M15 0l15 15-15 15L0 15z" /></svg></AppButton>
          <AppButton><svg width="28" height="28"><path fill="#0c5aa5" d="M2 2h24v18h2v2H0v-2h2z" /><rect x="2" y="2" width="24" height="18" fill="#0f6cc0" /><rect x="7" y="4" width="14" height="24" rx="1" fill="#0f9ff0" /><path fill="#1b82d8" d="M7 15h14v13H7z" /><path fill="#7fd4ff" d="M11 6h6v1h-6z" /></svg></AppButton>
          <AppButton $on><OperaO w={29} h={29} sw={7} /></AppButton>
          <AppButton><svg width="30" height="30"><circle cx="15" cy="15" r="14" fill="#1296ea" stroke="#fff" strokeWidth="2" /><text x="15" y="24" textAnchor="middle" fontFamily="Open Sans" fontWeight="700" fontSize="25" fill="#fff">?</text></svg><Badge $bg="#fcc200" $size={19} $right={4} $top={4} /></AppButton>
          <AppButton><Disc $bg="conic-gradient(#a34cf0 0 20%, #ffb81c 30% 55%, #ff6a2a 65% 80%, #c04cd8)" $size={28}><svg width="18" height="18" viewBox="0 0 18 18"><path fill="#fff" d="M9 0a9 8 0 0 1 9 7q0 7-9 11Q0 14 0 7a9 8 0 0 1 9-7z" /><circle cx="9" cy="7" r="2.2" fill="#333" /><path fill="#333" d="M8.200 8h1.600v5H8.200z" /></svg></Disc></AppButton>
          <AppButton $mark><Disc $bg="#000" $size={28}><FaSpotify size={29} color="#1ed984" /></Disc></AppButton>
          <AppButton $mark><svg width="30" height="30" viewBox="0 0 30 30"><path fill="#87939d" d="M12 0h6l1 4 4 2 4-1 3 5-3 3v4l3 3-3 5-4-1-4 2-1 4h-6l-1-4-4-2-4 1-3-5 3-3v-4L0 10l3-5 4 1 4-2z" /><circle cx="15" cy="15" r="7" fill="#e5ecf2" /><circle cx="15" cy="15" r="5.3" fill="#1667b8" /></svg></AppButton>
        </Apps>
        <Tray>
          <TraySlot $w={22}><ChevronUp size={26} strokeWidth={1.2} /></TraySlot>
          <TraySlot $w={36}><svg width="21" height="18"><path fill="#8f9193" d="M4 14a4.500 4.500 0 0 1 0-8A7 7 0 0 1 16 5l2 9z" /><path fill="#e8e8e8" d="M0 11l7-4 5 7H3z" /><circle cx="14.5" cy="12.5" r="5.5" fill="#f4281c" /><path d="M12.500 10.500l4 4M16.500 10.500l-4 4" stroke="#fff" strokeWidth="1.4" /></svg></TraySlot>
          <TraySlot $w={24}><svg width="19" height="19"><path fill="#fff" d="M5 0l4 2-4 3-4-3zM14 0l4 2-4 3-4-3zM14 6l4 2-4 3-4-3zM12 12l3 1-3 2z" /><rect y="7" width="11" height="11" rx="2" fill="#e8101c" /><text x="5.5" y="16" textAnchor="middle" fontFamily="Open Sans" fontSize="9" fontWeight="700" fill="#fff">3</text></svg></TraySlot>
          <TraySlot $w={64}><Stack $align="center">ENG<br />FR</Stack></TraySlot>
          <TraySlot $w={30}><Wifi size={23} strokeWidth={1.8} /></TraySlot>
          <TraySlot $w={28}><Volume2 size={20} strokeWidth={1.6} /></TraySlot>
          <TraySlot $w={34}><svg width="20" height="16" viewBox="0 0 20 16"><rect x="6" y="4" width="12" height="9" rx="1.5" fill="#fff" /><path fill="#fff" d="M18 6.500h2v4h-2z" /><path d="M3 8v7h12M2 0v4M5 0v4" stroke="#fff" strokeWidth="1.4" fill="none" /><path fill="#fff" d="M.5 3h6v3l-3 2.500-3-2.500z" /></svg></TraySlot>
          <TraySlot $w={87} $end><Stack $align="right">00:45<br />02/10/2022</Stack></TraySlot>
          <TraySlot $w={30} $end><svg width="18" height="20" viewBox="0 0 18 20" fill="none" stroke="#fff" strokeWidth="1.5"><path d="M8 1C10 8 7 12.500 1 14.500 4 19 11 20 14.500 16 19 11 16 2 8 1z" /></svg></TraySlot>
        </Tray>
      </Taskbar>
    </Screen>
  );
}
